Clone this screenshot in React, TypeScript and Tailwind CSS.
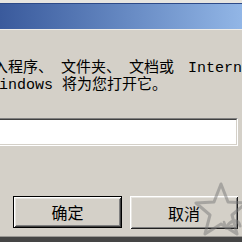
export default function App() {
  return (
    <div className="relative w-[242px] h-[242px] overflow-hidden bg-[#d4d0c8] flex flex-col text-black font-['Liberation_Mono','Noto_Sans_CJK_SC',monospace]">
      {/* window top edge */}
      <div className="h-[3px] shrink-0 bg-[#e7e5e0]" />
      {/* title bar */}
      <div className="h-[26px] shrink-0 border-t border-[#2d4a88] bg-linear-to-r from-[#3a5a9c] to-[#92b6e6]" />
      <div className="h-px shrink-0 bg-[#eeece8]" />

      {/* prompt text */}
      <div className="pt-[30px] text-[15px] leading-[17px] whitespace-nowrap">
        <div className="ml-[-7px]">
          入程序<span className="mr-[8px]">、</span>文件夹<span className="mr-[8px]">、</span>文档或
          <span className="ml-[14px]">Internet</span>
        </div>
        <div className="ml-[-10px]">Windows 将为您打开它。</div>
      </div>

      {/* sunken input field */}
      <div className="mt-[24px] ml-[-6px] mr-[4px] h-[28px] shrink-0 border-t border-l border-[#808080] border-r border-b border-r-white border-b-white">
        <div className="h-full bg-white border-t border-l border-[#404040] border-r border-b border-r-[#d4d0c8] border-b-[#d4d0c8]" />
      </div>

      {/* buttons */}
      <div className="mt-[50px] ml-[13px] flex items-start gap-[8px] text-[16px] font-['Noto_Sans_CJK_SC',sans-serif]">
        <div className="w-[109px] h-[32px] border border-black">
          <div className="h-full flex items-center justify-center shadow-[inset_1px_1px_0_#fff,inset_-1px_-1px_0_#404040,inset_2px_2px_0_#e6e4df,inset_-2px_-2px_0_#808080]">
            确定
          </div>
        </div>
        <div className="w-[108px] h-[33px] flex items-center justify-center shadow-[inset_1px_1px_0_#fff,inset_-1px_-1px_0_#202020,inset_2px_2px_0_#e6e4df,inset_-2px_-2px_0_#808080]">
          取消
        </div>
      </div>

      {/* window bottom edge */}
      <div className="mt-auto h-px shrink-0 bg-[#9a9894]" />
      <div className="h-[5px] shrink-0 bg-[#454545]" />

      {/* watermark */}
      <svg className="absolute left-[190px] top-[180px] w-[56px] h-[62px] opacity-50" viewBox="0 0 56 62" fill="none">
        <path
          d="M31 4 L38 22 L56 23 L42 35 L47 54 L31 44 L15 54 L20 35 L6 23 L24 22 Z"
          stroke="#7a7a7a"
          strokeWidth="3"
          strokeLinejoin="round"
        />
        <path d="M36 48 C40 40 48 38 50 46" stroke="#7a7a7a" strokeWidth="3" strokeLinecap="round" />
        <path d="M36 48 L34 42 M36 48 L42 46" stroke="#7a7a7a" strokeWidth="2.5" strokeLinecap="round" />
      </svg>
    </div>
  )
}
